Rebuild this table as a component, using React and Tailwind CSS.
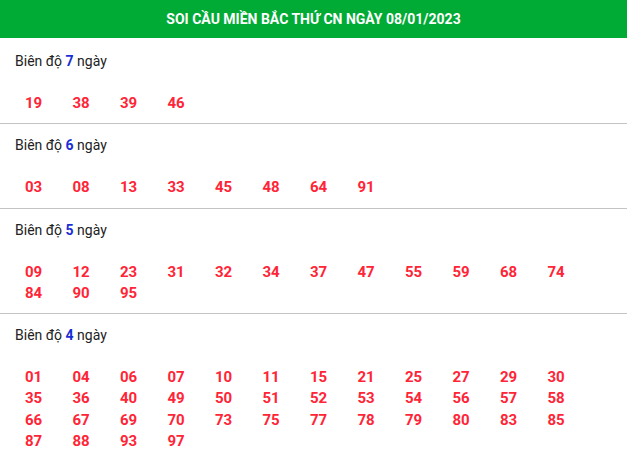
import React from "react";

const sections = [
  { n: 7, nums: ["19", "38", "39", "46"], first: true },
  { n: 6, nums: ["03", "08", "13", "33", "45", "48", "64", "91"] },
  { n: 5, nums: ["09", "12", "23", "31", "32", "34", "37", "47", "55", "59", "68", "74", "84", "90", "95"] },
  {
    n: 4,
    nums: [
      "01", "04", "06", "07", "10", "11", "15", "21", "25", "27", "29", "30",
      "35", "36", "40", "49", "50", "51", "52", "53", "54", "56", "57", "58",
      "66", "67", "69", "70", "73", "75", "77", "78", "79", "80", "83", "85",
      "87", "88", "93", "97",
    ],
    last: true,
  },
];

export default function App() {
  return (
    <div className="w-[627px] h-[462px] overflow-hidden bg-white" style={{ fontFamily: "Roboto, 'Liberation Sans', sans-serif" }}>
      <div className="h-[38px] bg-[#00ab35] flex items-center justify-center">
        <span className="text-white font-bold text-[14px] tracking-[0px]">SOI CẦU MIỀN BẮC THỨ CN NGÀY 08/01/2023</span>
      </div>
      {sections.map((s) => (
        <div
          key={s.n}
          className={
            (s.first ? "pt-[13px] " : "pt-[11px] ") +
            (s.last ? "" : "pb-[9px] border-b border-[#c4c4c4]")
          }
        >
          <div className="pl-[15px] text-[14px] leading-[20px] text-[#222]">
            Biên độ <span className="font-bold text-[#1a2ed6]">{s.n}</span> ngày
          </div>
          <div className="mt-[22px] pl-[25px] grid grid-cols-[repeat(12,47.5px)]">
            {s.nums.map((x) => (
              <div key={x} className="h-[21.3px] leading-[21.3px] text-[15px] font-bold text-[#ff2436]">
                {x}
              </div>
            ))}
          </div>
        </div>
      ))}
    </div>
  );
}
